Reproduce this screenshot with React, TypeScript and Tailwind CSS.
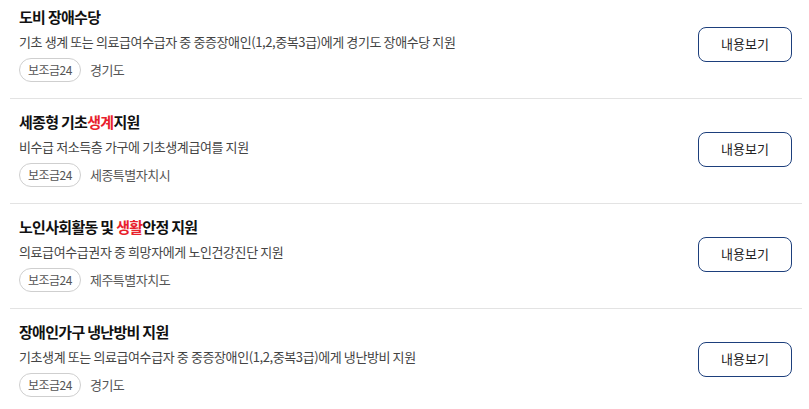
const ITEMS = [
  {
    title: <>도비 장애수당</>,
    desc: "기초 생계 또는 의료급여수급자 중 중증장애인(1,2,중복3급)에게 경기도 장애수당 지원",
    region: "경기도",
  },
  {
    title: <>세종형 기초<span className="text-[#e8212b]">생계</span>지원</>,
    desc: "비수급 저소득층 가구에 기초생계급여를 지원",
    region: "세종특별자치시",
  },
  {
    title: <>노인사회활동 및 <span className="text-[#e8212b]">생활</span>안정 지원</>,
    desc: "의료급여수급권자 중 희망자에게 노인건강진단 지원",
    region: "제주특별자치도",
  },
  {
    title: <>장애인가구 냉난방비 지원</>,
    desc: "기초생계 또는 의료급여수급자 중 중증장애인(1,2,중복3급)에게 냉난방비 지원",
    region: "경기도",
  },
];

export default function App() {
  return (
    <div
      className="w-[809px] h-[409px] overflow-hidden bg-white"
      style={{ fontFamily: '"Noto Sans CJK KR", "Noto Sans", sans-serif' }}
    >
      <ul className="ml-[10px] mr-[7px]">
        {ITEMS.map((item, idx) => (
          <li
            key={idx}
            className={`flex items-center justify-between border-b border-[#e3e3e3] pl-[9px] pr-[10px] pb-4 ${idx === 0 ? "pt-[6px]" : "pt-3"}`}
          >
            <div className="flex flex-col">
              <h3 className="text-[15px] leading-[22px] font-bold tracking-[-0.7px] text-[#111]">{item.title}</h3>
              <p className="mt-1 text-[13px] leading-[20px] tracking-[-0.4px] text-[#444]">{item.desc}</p>
              <div className="mt-[6px] flex items-center gap-[9px]">
                <span className="h-6 px-[8px] rounded-full border border-[#cfcfcf] text-[12px] leading-[22px] tracking-[-0.5px] text-[#555]">
                  보조금24
                </span>
                <span className="text-[13px] tracking-[-0.5px] text-[#555]">{item.region}</span>
              </div>
            </div>
            <button className="w-[94px] h-[35px] rounded-[8px] border-[1.5px] border-[#1d3f7c] text-[13px] text-[#222] bg-white">
              내용보기
            </button>
          </li>
        ))}
      </ul>
    </div>
  );
}
